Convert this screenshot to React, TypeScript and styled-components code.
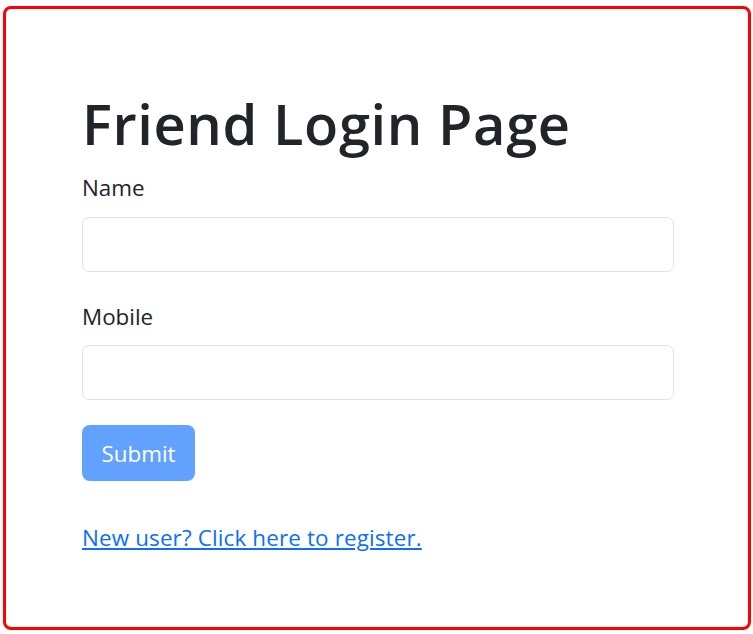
import React from "react";
import styled, { createGlobalStyle } from "styled-components";

const text = "#212529";
const primary = "#0d6efd";
const border = "#dee2e6";

const GlobalStyle = createGlobalStyle`
  * {
    box-sizing: border-box;
  }

  body {
    margin: 0;
    background: #fff;
    font-family: "Open Sans", "Noto Sans", "Liberation Sans", sans-serif;
    color: ${text};
  }
`;

const Frame = styled.div`
  height: 624px;
  margin: 6px 2px 4px 3px;
  padding: 81px 74px 0 76px;

  border: 3px solid red;
  border-radius: 8px;
`;

const Title = styled.h1`
  margin: 0 0 14px;

  font-size: 56px;
  font-weight: 600;
  line-height: 67px;
  letter-spacing: 0.6px;
`;

const Field = styled.div`
  margin-bottom: 28px;
`;

const Label = styled.label`
  display: block;
  margin-bottom: 12px;

  font-size: 22.4px;
  line-height: 33.6px;
`;

const Input = styled.input`
  display: block;
  width: 100%;
  height: 55px;
  padding: 5px 17px;

  border: 1px solid ${border};
  border-radius: 7px;
  font: inherit;
  font-size: 22.4px;
  color: ${text};
  outline: none;
`;

const SubmitButton = styled.button`
  display: block;
  width: 113px;
  height: 56px;
  margin-top: -3px;
  padding: 0;

  border: none;
  border-radius: 8px;
  background: #62a1fe;
  color: #fff;
  font: inherit;
  font-size: 22.4px;
`;

const RegisterLink = styled.a`
  display: inline-block;
  margin-top: 40px;

  color: ${primary};
  font-size: 22.4px;
  line-height: 33.6px;
  letter-spacing: 0.15px;
  text-decoration: underline;
`;

export default function App() {
  return (
    <>
      <GlobalStyle />
      <Frame>
        <Title>Friend Login Page</Title>
        <form onSubmit={(e) => e.preventDefault()}>
          <Field>
            <Label htmlFor="name">Name</Label>
            <Input id="name" type="text" />
          </Field>
          <Field>
            <Label htmlFor="mobile">Mobile</Label>
            <Input id="mobile" type="text" />
          </Field>
          <SubmitButton type="submit" disabled>
            Submit
          </SubmitButton>
        </form>
        <RegisterLink href="#">New user? Click here to register.</RegisterLink>
      </Frame>
    </>
  );
}
